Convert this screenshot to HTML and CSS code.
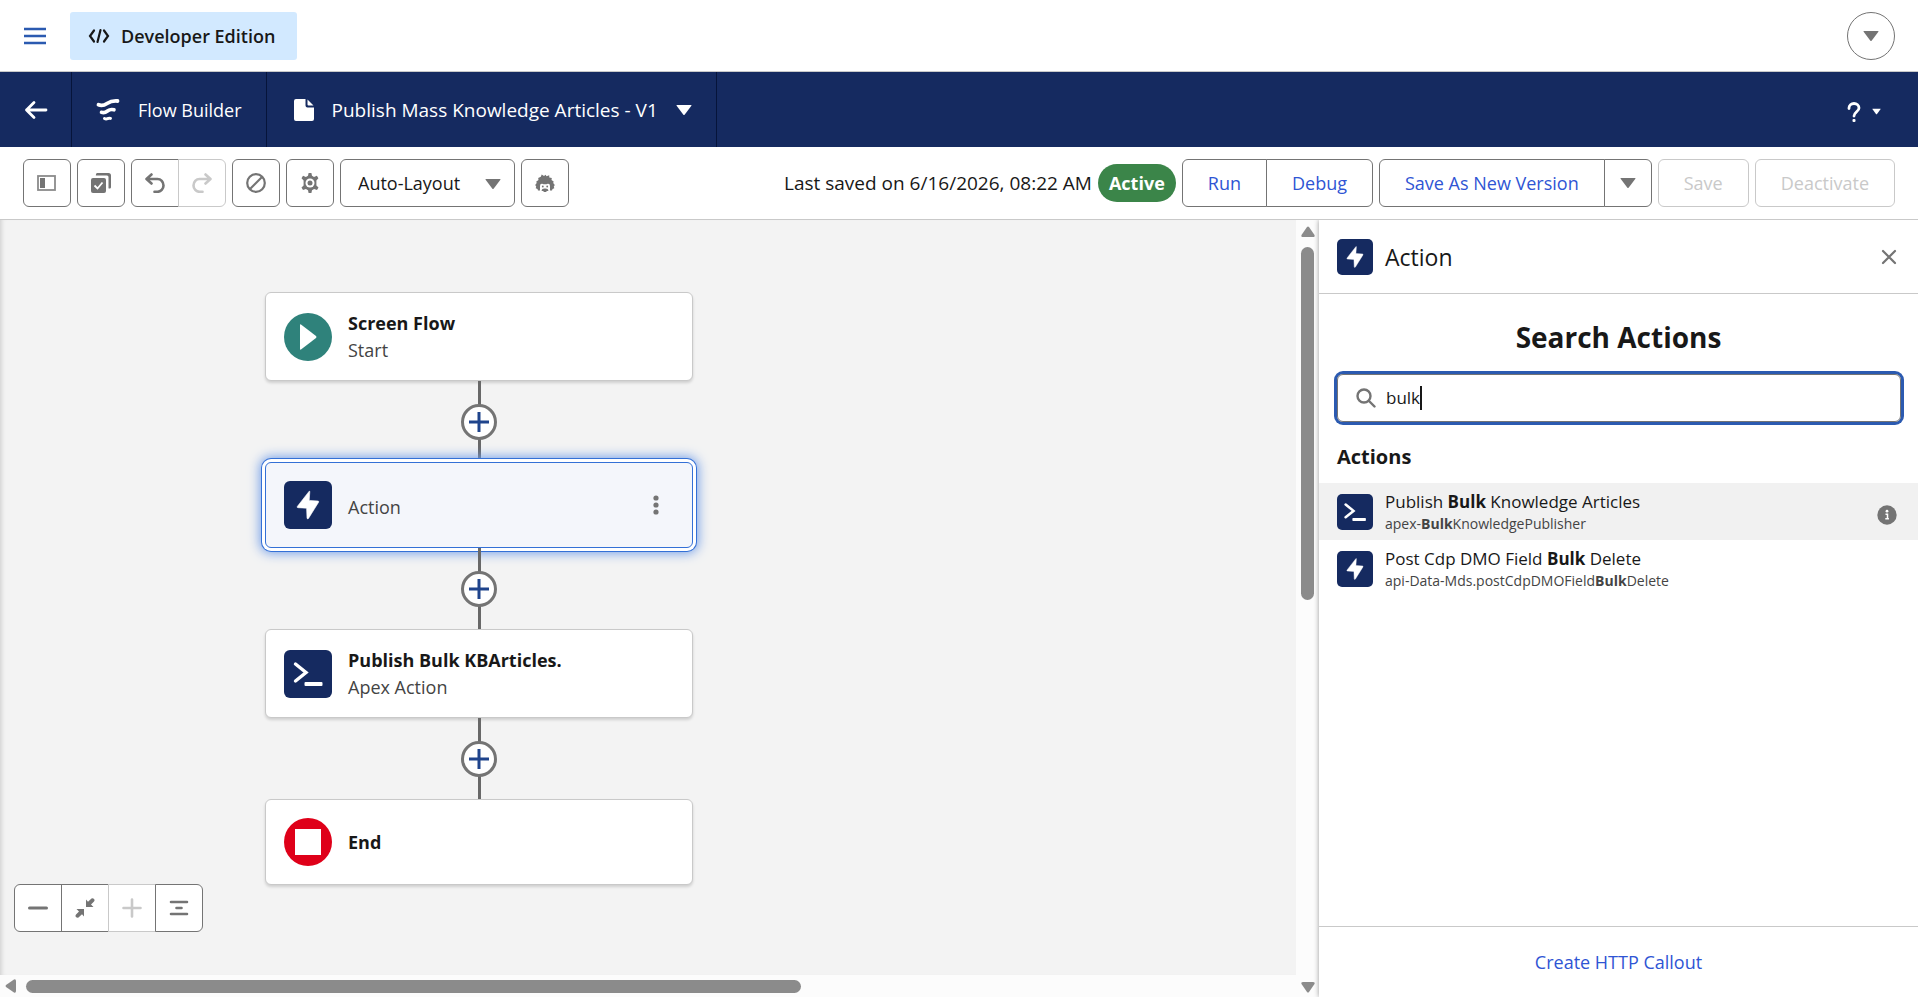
FILE: index.html
```html
<!DOCTYPE html>
<html lang="en">
<head>
    <meta charset="UTF-8">
    <meta name="viewport" content="width=device-width, initial-scale=1.0">
    <title>Publish Mass Knowledge Articles - V1</title>
    <link rel="stylesheet" href="styles.css">
</head>
<body>
    <!-- Shared icons -->
    <svg class="icon-defs" aria-hidden="true">
        <symbol id="icon-bolt" viewBox="0 0 48 48">
            <path d="M25.2 10.2 L13.3 25.5 Q12.800 26.600 14 26.700 L22.6 27.2 L23 37 Q23.300 38.600 24.500 37.400 L34.6 21.2 Q35 20 34 20 L25.2 19.4 L25.800 10.800 Q25.800 9.800 25.2 10.2z" fill="#fff" stroke="#fff" stroke-width=".6" stroke-linejoin="round"/>
        </symbol>
        <symbol id="icon-apex" viewBox="0 0 48 48">
            <path d="M11.5 14 L22 22.5 L11.5 31" fill="none" stroke="#fff" stroke-width="3.4" stroke-linecap="round" stroke-linejoin="miter"/>
            <rect x="20.5" y="32" width="18" height="4" rx="1" fill="#fff"/>
        </symbol>
        <symbol id="icon-caret" viewBox="0 0 16 12">
            <path d="M1 1h14q.8 0 .4.7L8.6 10.700q-.6.7-1.200 0L.6 1.700Q.2 1 1 1z" fill="currentColor"/>
        </symbol>
        <symbol id="icon-add" viewBox="0 0 20 20">
            <path d="M10 0v20M0 10h20" stroke="currentColor" stroke-width="3" fill="none"/>
        </symbol>
    </svg>

    <header class="top-bar">
        <button class="menu-btn" aria-label="Menu">
            <svg width="22" height="18" viewBox="0 0 22 18"><path d="M0 2h22M0 9h22M0 16h22" stroke="#2b5ab0" stroke-width="2.500"/></svg>
        </button>
        <div class="edition">
            <svg width="22" height="16" viewBox="0 0 22 16" fill="none" stroke="#181818" stroke-width="2.200" stroke-linecap="round"><path d="M6 2.500 L2 8 L6 13.500M16 2.500 L20 8 L16 13.500M12.500 2 L9.500 14"/></svg>
            <span>Developer Edition</span>
        </div>
        <button class="round-btn" aria-label="More options"><svg width="16" height="12"><use href="#icon-caret"/></svg></button>
    </header>

    <nav class="builder-bar">
        <a href="#" class="builder-back" aria-label="Back">
            <svg width="24" height="20" viewBox="0 0 24 20" fill="none" stroke="#fff" stroke-width="2.800" stroke-linecap="round" stroke-linejoin="round"><path d="M2.500 10h19.500M10 2.500 L2.500 10 L10 17.500"/></svg>
        </a>
        <div class="builder-name">
            <svg width="24" height="24" viewBox="0 0 24 24" fill="none" stroke="#fff" stroke-linecap="round"><path d="M2.500 6.800Q6.500 8.500 11 5.500T21.500 3" stroke-width="3.800"/><path d="M5.500 14.300Q8.500 15.300 11.500 13T18 11.800" stroke-width="3.600"/><path d="M8.500 20.500Q10 21.300 11.500 20.600T14.500 20.400" stroke-width="3"/></svg>
            <span>Flow Builder</span>
        </div>
        <button class="flow-name">
            <svg width="20" height="22" viewBox="0 0 20 22" fill="#fff"><path d="M2 0h9.500v6.500a2 2 0 0 0 2 2H20V20a2 2 0 0 1-2 2H2a2 2 0 0 1-2-2V2a2 2 0 0 1 2-2z"/><path d="M13.500.5 L19.500 6.500H14.500a1 1 0 0 1-1-1z"/></svg>
            <span>Publish Mass Knowledge Articles - V1</span>
            <svg width="16" height="12"><use href="#icon-caret"/></svg>
        </button>
        <button class="help-btn" aria-label="Help">
            <svg width="14" height="20" viewBox="0 0 14 20"><path d="M2 6.500V6a5 4.500 0 0 1 10 0c0 3.500-5 4-5 8" fill="none" stroke="#fff" stroke-width="2.800" stroke-linecap="round"/><rect x="5.500" y="17" width="3" height="3" rx="1" fill="#fff"/></svg>
            <svg width="9" height="7"><use href="#icon-caret"/></svg>
        </button>
    </nav>

    <div class="toolbar">
        <button class="tool-btn" aria-label="Toggle toolbox">
            <svg width="20" height="18" viewBox="0 0 20 18"><rect x="1" y="2" width="17" height="14" fill="none" stroke="#8b8b8b" stroke-width="1.800"/><rect x="3" y="4" width="5" height="10" fill="#747474"/></svg>
        </button>
        <button class="tool-btn" aria-label="Select elements">
            <svg width="20" height="20" viewBox="0 0 20 20"><path d="M6 0h11.500A2.500 2.500 0 0 1 20 2.500V14a1.500 1.500 0 0 1-2.500 1.200V4A1.500 1.500 0 0 0 16 2.500H4.800Q4.800 0 6 0z" fill="#747474"/><rect x="0" y="5" width="15" height="15" rx="2" fill="#747474"/><path d="M3.500 12.500l3 3 5-6" fill="none" stroke="#fff" stroke-width="1.800"/></svg>
        </button>
        <div class="btn-group">
            <button class="tool-btn" aria-label="Undo">
                <svg width="20" height="20" viewBox="0 0 20 20" fill="none" stroke="#747474" stroke-width="2.600" stroke-linecap="round" stroke-linejoin="round"><path d="M6.500 1.500 L1.500 6 L6.500 10.500M2 6h10.500a6 6.400 0 0 1 0 12.800H9.500"/></svg>
            </button>
            <button class="tool-btn" aria-label="Redo" disabled>
                <svg width="20" height="20" viewBox="0 0 20 20" fill="none" stroke="#c9c9c9" stroke-width="2.600" stroke-linecap="round" stroke-linejoin="round"><path d="M13.500 1.500 L18.500 6 L13.500 10.500M18 6H7.500a6 6.400 0 0 0 0 12.800h3"/></svg>
            </button>
        </div>
        <button class="tool-btn" aria-label="Disable">
            <svg width="20" height="20" viewBox="0 0 20 20" fill="none" stroke="#747474" stroke-width="2.200"><circle cx="10" cy="10" r="8.800"/><path d="M4 16 L16 4"/></svg>
        </button>
        <button class="tool-btn" aria-label="Settings">
            <svg width="20" height="20" viewBox="0 0 20 20"><path d="M8.600 0h2.800l.6 2.800 2 1.100 2.900-1.100 1.500 2.500-2 2.200v4.900l2.100 2-1.500 2.500-2.900-.9-2.100 1.200-.6 2.800H8.600L8 17.200 5.900 16 3 16.900l-1.500-2.500 2.100-2V7.500l-2.100-2.200L3 2.800l2.900 1.100L8 2.800z" fill="#747474"/><circle cx="10" cy="10" r="4.500" fill="#fff"/><circle cx="10" cy="10" r="2.500" fill="#747474"/></svg>
        </button>
        <div class="layout-select">
            <select aria-label="Layout">
                <option>Auto-Layout</option>
                <option>Free-Form</option>
            </select>
            <svg width="16" height="12"><use href="#icon-caret"/></svg>
        </div>
        <button class="tool-btn" aria-label="Einstein">
            <svg width="20" height="18" viewBox="0 0 20 18"><path d="M5.800 2.800 6.700.600 9 2l1.600-1.200.9 1.400 2.700-1 .1 2.300 2.500.5-.3 2 2.200 1.500-.5 1.600L19.800 11l-1 1.500.5 1.800-1.800.6-.5 1.700H3l-.5-1.700-1.800-.6.5-1.800L.2 11l1.500-1.900-.4-1.600L3.500 6l-.3-2z" fill="#747474"/><path d="M5 18V12q0-2.500 2.200-2.200 1.400.5 2.800.5t2.800-.5Q15 9.500 15 12v6z" fill="#fff"/><path d="M6.500 16.500q.5-2.300 3.500-2 3-.3 3.500 2-.8.900-1.800.4L11.200 18H8.800l-.5-1.100q-1 .5-1.800-.4z" fill="#747474"/><circle cx="7.800" cy="12.500" r=".9" fill="#747474"/><circle cx="12.200" cy="12.500" r=".9" fill="#747474"/></svg>
        </button>

        <div class="toolbar-right">
            <span class="saved-on">Last saved on 6/16/2026, 08:22 AM</span>
            <span class="badge">Active</span>
            <div class="btn-group">
                <button class="btn">Run</button>
                <button class="btn">Debug</button>
            </div>
            <div class="btn-group">
                <button class="btn">Save As New Version</button>
                <button class="tool-btn" aria-label="More save options"><svg width="16" height="12"><use href="#icon-caret"/></svg></button>
            </div>
            <button class="btn" disabled>Save</button>
            <button class="btn" disabled>Deactivate</button>
        </div>
    </div>

    <main class="workspace">
        <section class="canvas">
            <div class="canvas-body">
                <div class="flow">
                    <div class="node">
                        <span class="node-icon start">
                            <svg width="48" height="48" viewBox="0 0 48 48"><path d="M17 11.500 L32 23 Q33 24 32 25 L17 36.500 Q16 37 16 36 V12 Q16 11 17 11.500z" fill="#fff"/></svg>
                        </span>
                        <div class="node-text">
                            <strong>Screen Flow</strong>
                            <span>Start</span>
                        </div>
                    </div>
                    <div class="connector"><button class="add-btn" aria-label="Add element"><svg width="20" height="20"><use href="#icon-add"/></svg></button></div>
                    <div class="node short selected">
                        <span class="node-icon"><svg width="48" height="48"><use href="#icon-bolt"/></svg></span>
                        <div class="node-text"><span>Action</span></div>
                        <button class="node-menu" aria-label="Element actions">
                            <svg width="6" height="20" viewBox="0 0 6 20" fill="#747474"><circle cx="3" cy="3" r="2.600"/><circle cx="3" cy="10" r="2.600"/><circle cx="3" cy="17" r="2.600"/></svg>
                        </button>
                    </div>
                    <div class="connector"><button class="add-btn" aria-label="Add element"><svg width="20" height="20"><use href="#icon-add"/></svg></button></div>
                    <div class="node">
                        <span class="node-icon"><svg width="48" height="48"><use href="#icon-apex"/></svg></span>
                        <div class="node-text">
                            <strong>Publish Bulk KBArticles.</strong>
                            <span>Apex Action</span>
                        </div>
                    </div>
                    <div class="connector"><button class="add-btn" aria-label="Add element"><svg width="20" height="20"><use href="#icon-add"/></svg></button></div>
                    <div class="node short">
                        <span class="node-icon end">
                            <svg width="48" height="48" viewBox="0 0 48 48"><rect x="11" y="11" width="26" height="26" fill="#fff"/></svg>
                        </span>
                        <div class="node-text"><strong>End</strong></div>
                    </div>
                </div>

                <div class="btn-group zoom-controls">
                    <button class="tool-btn" aria-label="Zoom out"><svg width="20" height="20" viewBox="0 0 20 20"><path d="M1.500 10h17" stroke="#747474" stroke-width="3" stroke-linecap="round"/></svg></button>
                    <button class="tool-btn" aria-label="Zoom to fit"><svg width="20" height="20" viewBox="0 0 20 20" fill="#747474"><path d="M11 1.500 L13 3.800 L16.500.5 Q18 0 19.300 1.200 Q20 2.500 19 3.600 L16 6.500 L18.500 9H11z"/><path d="M9 18.500 L7 16.200 L3.500 19.500 Q2 20 .7 18.800 Q0 17.500 1 16.400 L4 13.500 L1.500 11H9z"/></svg></button>
                    <button class="tool-btn" aria-label="Zoom in" disabled><svg width="20" height="20" viewBox="0 0 20 20"><path d="M1.500 10h17M10 1.500v17" stroke="#c9c9c9" stroke-width="2.600" stroke-linecap="round"/></svg></button>
                    <button class="tool-btn" aria-label="Align"><svg width="20" height="18" viewBox="0 0 20 18"><path d="M2 3h16M7.500 9h5M2 15h16" stroke="#747474" stroke-width="2.600" stroke-linecap="round"/></svg></button>
                </div>
            </div>
            <div class="scroll-x">
                <svg width="12" height="16" viewBox="0 0 12 16" fill="#8b8b8b"><path d="M1 7 L9 1.500 Q11 .8 11 3 V13 Q11 15.200 9 14.500 L1 9 Q0 8 1 7z"/></svg>
                <div class="thumb"></div>
            </div>
            <div class="scroll-y">
                <svg width="16" height="12" viewBox="0 0 16 12" fill="#8b8b8b"><path d="M7 1 L1.500 9 Q.8 11 3 11 H13 Q15.200 11 14.500 9 L9 1 Q8 0 7 1z"/></svg>
                <div class="thumb"></div>
                <svg class="down" width="16" height="12" viewBox="0 0 16 12" fill="#8b8b8b"><path d="M7 11 L1.500 3 Q.8 1 3 1 H13 Q15.200 1 14.500 3 L9 11 Q8 12 7 11z"/></svg>
            </div>
        </section>

        <aside class="panel">
            <div class="panel-header">
                <span class="small-icon"><svg width="36" height="36"><use href="#icon-bolt"/></svg></span>
                <h2>Action</h2>
                <button class="close-btn" aria-label="Close"><svg width="16" height="16" viewBox="0 0 16 16"><path d="M2 2l12 12M14 2L2 14" stroke="#747474" stroke-width="2.200" stroke-linecap="round"/></svg></button>
            </div>
            <div class="panel-body">
                <h1>Search Actions</h1>
                <div class="search">
                    <svg width="20" height="20" viewBox="0 0 20 20" fill="none" stroke="#747474" stroke-width="2.400" stroke-linecap="round"><circle cx="8" cy="8" r="6.500"/><path d="M13 13l5.500 5.500"/></svg>
                    <input type="text" value="bulk" aria-label="Search Actions">
                    <span class="caret"></span>
                </div>
                <h3>Actions</h3>
                <ul class="results">
                    <li class="active">
                        <span class="small-icon"><svg width="36" height="36"><use href="#icon-apex"/></svg></span>
                        <a href="#" class="result-text">
                            <span class="result-title">Publish <b>Bulk</b> Knowledge Articles</span>
                            <span class="result-sub">apex-<b>Bulk</b>KnowledgePublisher</span>
                        </a>
                        <button class="info-btn" aria-label="Help"><svg width="20" height="20" viewBox="0 0 20 20"><circle cx="10" cy="10" r="9.700" fill="#747474"/><circle cx="10" cy="6.200" r="1.400" fill="#fff"/><path d="M8.500 9.300h2v4.200M8.300 13.800h3.600" fill="none" stroke="#fff" stroke-width="1.500"/></svg></button>
                    </li>
                    <li>
                        <span class="small-icon"><svg width="36" height="36"><use href="#icon-bolt"/></svg></span>
                        <a href="#" class="result-text">
                            <span class="result-title">Post Cdp DMO Field <b>Bulk</b> Delete</span>
                            <span class="result-sub">api-Data-Mds.postCdpDMOField<b>Bulk</b>Delete</span>
                        </a>
                    </li>
                </ul>
            </div>
            <div class="panel-footer">
                <a href="#">Create HTTP Callout</a>
            </div>
        </aside>
    </main>
</body>
</html>
```
FILE: styles.css
```css
/* Base styles */
* {
    box-sizing: border-box;
}

body {
    margin: 0;
    height: 100vh;
    display: flex;
    flex-direction: column;
    overflow: hidden;
    font-family: "Open Sans", "Noto Sans", sans-serif;
    font-size: 18px;
    line-height: 26px;
    color: #181818;
    background: #fff;
}

button, input, select {
    font: inherit;
    color: inherit;
}

button {
    display: flex;
    align-items: center;
    justify-content: center;
    padding: 0;
    border: none;
    background: none;
    cursor: pointer;
}

a {
    color: inherit;
    text-decoration: none;
}

svg {
    display: block;
    flex: none;
}

.icon-defs {
    position: absolute;
    width: 0;
    height: 0;
}

/* Top bar */
.top-bar {
    display: flex;
    align-items: center;
    height: 72px;
    padding: 0 23px 0 24px;
    border-bottom: 1px solid #c9c9c9;
}

.edition {
    display: flex;
    align-items: center;
    gap: 11px;
    height: 48px;
    margin-left: 24px;
    padding: 0 22px 0 18px;
    border-radius: 3px;
    background: #d2e9ff;
    font-weight: 600;
}

.round-btn {
    width: 48px;
    height: 48px;
    margin-left: auto;
    border: 1px solid #747474;
    border-radius: 50%;
    color: #747474;
}

/* Navy bar */
.builder-bar {
    display: flex;
    height: 75px;
    background: #152a60;
    color: #fff;
}

.builder-back, .builder-name, .flow-name {
    display: flex;
    align-items: center;
    border-right: 1px solid #06143a;
}

.builder-back {
    justify-content: center;
    width: 72px;
}

.builder-name {
    gap: 18px;
    padding: 0 24px;
}

.flow-name {
    gap: 18px;
    padding: 0 24px 0 27px;
    font-size: 19px;
}

.help-btn {
    gap: 11px;
    margin-left: auto;
    padding: 4px 37px 0 0;
}

/* Toolbar */
.toolbar {
    display: flex;
    align-items: center;
    gap: 6px;
    height: 73px;
    padding: 0 23px;
    border-bottom: 1px solid #c9c9c9;
}

.tool-btn, .btn {
    height: 48px;
    border: 1px solid #747474;
    border-radius: 6px;
    background: #fff;
}

.tool-btn {
    width: 48px;
    color: #747474;
}

.btn {
    padding: 0 25px;
    color: #2f55d4;
    white-space: nowrap;
}

.tool-btn:disabled, .btn:disabled {
    border-color: #c9c9c9;
    color: #c9c9c9;
    cursor: default;
}

.btn-group {
    display: flex;
}

.btn-group > :not(:first-child) {
    margin-left: -1px;
    border-top-left-radius: 0;
    border-bottom-left-radius: 0;
}

.btn-group > :not(:last-child) {
    border-top-right-radius: 0;
    border-bottom-right-radius: 0;
}

.layout-select {
    position: relative;
    color: #747474;
}

.layout-select select {
    appearance: none;
    width: 175px;
    height: 48px;
    padding: 0 17px;
    border: 1px solid #747474;
    border-radius: 6px;
    background: #fff;
    color: #181818;
}

.layout-select svg {
    position: absolute;
    top: 19px;
    right: 14px;
    pointer-events: none;
}

.toolbar-right {
    display: flex;
    align-items: center;
    gap: 6px;
    margin-left: auto;
}

.saved-on {
    font-size: 19px;
}

.badge {
    padding: 6px 11px;
    border-radius: 19px;
    background: #3b8549;
    color: #fff;
    font-weight: 700;
}

/* Canvas */
.workspace {
    display: flex;
    flex: 1;
    min-height: 0;
}

.canvas {
    display: grid;
    grid-template: 1fr 22px / 1fr 23px;
    flex: 1;
    background: #fcfcfc;
}

.canvas-body {
    position: relative;
    padding: 72px 0 0 265px;
    background: #f3f3f3;
    box-shadow: inset 5px 0 5px -4px #c9c9c9;
}

.flow {
    width: 428px;
}

.node {
    display: flex;
    align-items: center;
    gap: 16px;
    height: 89px;
    padding: 0 18px;
    border: 1px solid #c9c9c9;
    border-radius: 6px;
    background: #fff;
    box-shadow: 0 2px 3px rgba(0, 0, 0, 0.15);
}

.node.short {
    height: 86px;
}

.node.selected {
    border-color: #3470d6;
    background: #f4f6fb;
    box-shadow: 0 0 0 3px #fff, 0 0 0 4px #3470d6, 0 0 12px 5px #6f9ce8;
}

.node-icon, .small-icon {
    flex: none;
    border-radius: 6px;
    background: #152a60;
}

.node-icon.start, .node-icon.end {
    border-radius: 50%;
}

.node-icon.start {
    background: #2f827b;
}

.node-icon.end {
    background: #df0019;
}

.node-text {
    display: flex;
    flex-direction: column;
    line-height: 27px;
}

.node-text strong {
    font-weight: 700;
}

.node-text span {
    color: #444;
}

.selected .node-text {
    padding-top: 4px;
}

.node-menu {
    margin-left: auto;
    padding: 0 15px;
}

.connector {
    display: flex;
    align-items: center;
    justify-content: center;
    height: 81px;
    background: linear-gradient(#686868, #686868) center / 3px 100% no-repeat;
}

.add-btn {
    width: 36px;
    height: 36px;
    border: 3px solid #747474;
    border-radius: 50%;
    background: #fff;
    color: #1f448c;
}

/* Floats over the canvas */
.zoom-controls {
    position: absolute;
    left: 14px;
    bottom: 43px;
}

/* Scrollbars */
.scroll-x {
    grid-area: 2 / 1;
    display: flex;
    align-items: center;
    gap: 9px;
    padding-left: 5px;
}

.scroll-x .thumb {
    width: 60%;
    height: 13px;
    border-radius: 7px;
    background: #8b8b8b;
}

.scroll-y {
    grid-area: 1 / 2 / 3 / 3;
    display: flex;
    flex-direction: column;
    align-items: center;
    gap: 9px;
    padding: 6px 0 4px;
}

.scroll-y .thumb {
    width: 13px;
    height: 46%;
    border-radius: 7px;
    background: #8b8b8b;
}

.scroll-y .down {
    margin-top: auto;
}

/* Action panel */
.panel {
    display: flex;
    flex-direction: column;
    width: 599px;
    background: #fff;
    box-shadow: 0 0 5px rgba(0, 0, 0, 0.4);
    clip-path: inset(0 0 0 -8px);
}

.panel-header {
    display: flex;
    align-items: center;
    gap: 12px;
    height: 74px;
    padding: 0 21px 0 18px;
    border-bottom: 1px solid #c9c9c9;
}

.small-icon {
    border-radius: 5px;
}

.panel-header h2 {
    margin: 0;
    font-size: 23px;
    font-weight: 400;
    line-height: 32px;
}

.close-btn {
    margin-left: auto;
}

.panel-body {
    flex: 1;
    padding-top: 24px;
}

.panel-body h1 {
    margin: 0 0 17px;
    font-size: 28px;
    font-weight: 700;
    line-height: 39px;
    text-align: center;
}

.search {
    position: relative;
    display: flex;
    align-items: center;
    gap: 10px;
    height: 48px;
    margin: 0 17px 0 18px;
    padding: 0 18px;
    border: 1px solid #747474;
    border-radius: 6px;
    box-shadow: 0 0 0 3px #2b5ab0;
}

.search input {
    flex: 1;
    min-width: 0;
    padding: 0;
    border: none;
    outline: none;
    background: none;
    font-size: 17px;
}

/* Text cursor drawn over the field */
.caret {
    position: absolute;
    left: 82px;
    top: 11px;
    width: 2px;
    height: 24px;
    background: #181818;
}

.panel-body h3 {
    margin: 22px 18px 13px;
    font-size: 20px;
    font-weight: 700;
    line-height: 26px;
}

.results {
    margin: 0;
    padding: 0;
    list-style: none;
}

.results li {
    display: flex;
    align-items: center;
    gap: 12px;
    height: 57px;
    padding: 0 21px 0 18px;
}

.results li.active {
    background: #f1f1f1;
}

.result-text {
    display: flex;
    flex-direction: column;
}

.result-title {
    font-size: 17px;
    line-height: 24px;
}

.result-sub {
    color: #444;
    font-size: 14px;
    line-height: 20px;
}

.info-btn {
    margin-left: auto;
    padding-top: 6px;
}

.panel-footer {
    display: flex;
    align-items: center;
    justify-content: center;
    height: 71px;
    border-top: 1px solid #c9c9c9;
    color: #2f55d4;
}
```
